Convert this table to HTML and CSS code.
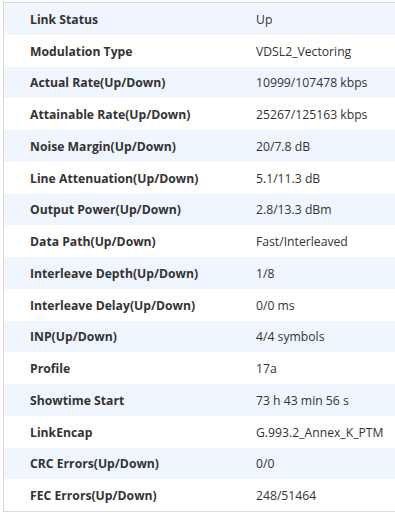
FILE: index.html
```html
<!DOCTYPE html>
<html>
<head>
<meta charset="utf-8">
<link rel="stylesheet" href="styles.css">
</head>
<body>
<div class="panel">
  <div class="row"><div class="label">Link Status</div><div class="value">Up</div></div>
  <div class="row"><div class="label">Modulation Type</div><div class="value">VDSL2_Vectoring</div></div>
  <div class="row"><div class="label">Actual Rate(Up/Down)</div><div class="value">10999/107478 kbps</div></div>
  <div class="row"><div class="label">Attainable Rate(Up/Down)</div><div class="value">25267/125163 kbps</div></div>
  <div class="row"><div class="label">Noise Margin(Up/Down)</div><div class="value">20/7.8 dB</div></div>
  <div class="row"><div class="label">Line Attenuation(Up/Down)</div><div class="value">5.1/11.3 dB</div></div>
  <div class="row"><div class="label">Output Power(Up/Down)</div><div class="value">2.8/13.3 dBm</div></div>
  <div class="row"><div class="label">Data Path(Up/Down)</div><div class="value">Fast/Interleaved</div></div>
  <div class="row"><div class="label">Interleave Depth(Up/Down)</div><div class="value">1/8</div></div>
  <div class="row"><div class="label">Interleave Delay(Up/Down)</div><div class="value">0/0 ms</div></div>
  <div class="row"><div class="label">INP(Up/Down)</div><div class="value">4/4 symbols</div></div>
  <div class="row"><div class="label">Profile</div><div class="value">17a</div></div>
  <div class="row"><div class="label">Showtime Start</div><div class="value">73 h 43 min 56 s</div></div>
  <div class="row"><div class="label">LinkEncap</div><div class="value">G.993.2_Annex_K_PTM</div></div>
  <div class="row"><div class="label">CRC Errors(Up/Down)</div><div class="value">0/0</div></div>
  <div class="row"><div class="label">FEC Errors(Up/Down)</div><div class="value">248/51464</div></div>
</div>
</body>
</html>
```
FILE: styles.css
```css
html, body {
  margin: 0;
  padding: 0;
  background: #ffffff;
}
body {
  font-family: "Open Sans", "Noto Sans", sans-serif;
  font-size: 12.2px;
  color: #333333;
  overflow: hidden;
}
.panel {
  margin: 2px 0 0 3px;
  width: 391px;
  border-top: 1px solid #d9d9d9;
  border-left: 1px solid #d9d9d9;
  border-bottom: 1px solid #d9d9d9;
}
.row {
  display: grid;
  grid-template-columns: 252px 1fr;
  height: 31.75px;
  align-items: center;
}
.row:nth-child(odd) {
  background: #eff6fe;
}
.label {
  padding-left: 26px;
  font-weight: 700;
  padding-top: 1px;
}
.value {
  font-weight: 400;
  padding-top: 1px;
  white-space: nowrap;
}
```
